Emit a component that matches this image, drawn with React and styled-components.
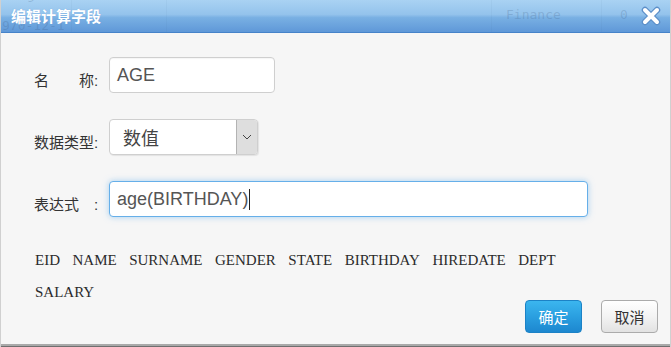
import React from "react";
import styled, { createGlobalStyle } from "styled-components";

const GlobalStyle = createGlobalStyle`
	html, body {
		margin: 0;
		padding: 0;
		background: #f6f6f6;
	}
	* {
		box-sizing: border-box;
	}
`;

const CJK = `"Liberation Sans", "Noto Sans CJK SC", sans-serif`;

const Dialog = styled.div`
	width: 671px;
	height: 347px;
	display: flex;
	flex-direction: column;
	background: #f6f6f6;
	border-left: 1px solid #d0d0d0;
	border-right: 1px solid #d0d0d0;
	box-shadow: inset 0 -1px 0 #6f6f6f, inset 0 -3px 0 #a9a9a9;
	overflow: hidden;
`;

const TitleBar = styled.div`
	position: relative;
	height: 33px;
	flex-shrink: 0;
	display: flex;
	align-items: center;
	justify-content: space-between;
	padding: 0 8px 1px 10px;
	background: linear-gradient(to bottom, #a9d2f3 0%, #94c3ec 45%, #79b0e3 55%, #5f98d8 100%);
	border-bottom: 1px solid #4683c9;
`;

// faint table behind the translucent title bar
const Ghost = styled.span`
	position: absolute;
	left: ${(p) => p.x}px;
	top: ${(p) => p.y}px;
	font-family: "DejaVu Sans Mono", "Liberation Mono", monospace;
	font-size: 13px;
	color: rgba(60, 90, 130, 0.22);
	white-space: pre;
`;

const GhostLine = styled.span`
	position: absolute;
	left: ${(p) => p.x}px;
	top: 0;
	bottom: 0;
	width: 1px;
	background: rgba(60, 90, 130, 0.05);
`;

const Title = styled.span`
	position: relative;
	font-family: ${CJK};
	font-size: 15px;
	font-weight: bold;
	color: #fff;
	text-shadow: 0 0 1px #6c9fd8;
`;

const Close = styled.svg`
	position: relative;
	width: 22px;
	height: 22px;
`;

const Body = styled.div`
	flex: 1;
	display: flex;
	flex-direction: column;
	padding: 24px 0 0 33px;
`;

const Form = styled.div`
	display: flex;
	flex-direction: column;
	gap: 26px;
`;

const Row = styled.div`
	display: flex;
	align-items: center;
	height: 36px;
`;

const Label = styled.span`
	width: 75px;
	margin-top: 8px;
	font-family: ${CJK};
	font-size: 15px;
	color: #333;
	white-space: pre;
`;

const TextBox = styled.div`
	width: ${(p) => p.w}px;
	height: 36px;
	display: flex;
	align-items: center;
	padding-left: 7px;
	background: #fff;
	border: 1px solid ${(p) => (p.focused ? "#66afe9" : "#cfcfcf")};
	border-radius: 4px;
	box-shadow: ${(p) =>
		p.focused ? "0 0 6px rgba(102, 175, 233, 0.55)" : "inset 0 1px 1px rgba(0, 0, 0, 0.04)"};
	font-family: "Liberation Sans", Arial, sans-serif;
	font-size: 18px;
	color: #555;
`;

const Caret = styled.span`
	display: inline-block;
	width: 1px;
	height: 21px;
	margin-left: 1px;
	background: #222;
`;

const Select = styled.div`
	width: 149px;
	height: 36px;
	display: flex;
	background: #fff;
	border: 1px solid #cfcfcf;
	border-radius: 4px;
	overflow: hidden;
	box-shadow: 1px 1px 1px rgba(0, 0, 0, 0.08);
`;

const SelectValue = styled.span`
	flex: 1;
	display: flex;
	align-items: center;
	padding-left: 13px;
	font-family: ${CJK};
	font-size: 18px;
	color: #444;
`;

const ArrowBox = styled.span`
	width: 21px;
	display: flex;
	align-items: center;
	justify-content: center;
	background: #dedede;
	border-left: 1px solid #b3b3b3;
`;

const FieldList = styled.div`
	width: 557px;
	margin: 27px 0 -12px 1px;
	display: flex;
	flex-wrap: wrap;
	column-gap: 12.5px;
	font-family: "Liberation Serif", "Times New Roman", serif;
	font-size: 15px;
	line-height: 32px;
	color: #2b2b2b;
`;

const Footer = styled.div`
	display: flex;
	justify-content: flex-end;
	gap: 19px;
	padding: 0 12px 14px 0;
	margin-top: auto;
`;

const Button = styled.button`
	width: 57px;
	height: 33px;
	padding: 0;
	border-radius: 4px;
	font-family: ${CJK};
	font-size: 15px;
	cursor: pointer;
	border: 1px solid ${(p) => (p.primary ? "#1c82c6" : "#ababab")};
	color: ${(p) => (p.primary ? "#fff" : "#333")};
	background: ${(p) =>
		p.primary
			? "linear-gradient(to bottom, #3bb6ef 0%, #2a9fe0 50%, #1d87cf 100%)"
			: "linear-gradient(to bottom, #ffffff 0%, #f3f3f3 50%, #e2e2e2 100%)"};
`;

const fields = ["EID", "NAME", "SURNAME", "GENDER", "STATE", "BIRTHDAY", "HIREDATE", "DEPT", "SALARY"];

export default function App() {
	return (
		<>
			<GlobalStyle />
			<Dialog>
				<TitleBar>
					<Ghost x={26} y={-10}>9</Ghost>
					<Ghost x={1} y={18}>970-12-1</Ghost>
					<Ghost x={505} y={7}>Finance</Ghost>
					<Ghost x={619} y={7}>0</Ghost>
					<GhostLine x={70} />
					<GhostLine x={165} />
					<GhostLine x={490} />
					<GhostLine x={600} />
					<Title>编辑计算字段</Title>
					<Close viewBox="0 0 22 22">
						<path d="M5 5 L17 17 M17 5 L5 17" stroke="#5c8fc9" strokeWidth="6.5" strokeLinecap="round" fill="none" />
						<path d="M5 5 L17 17 M17 5 L5 17" stroke="#fff" strokeWidth="4" strokeLinecap="round" fill="none" />
					</Close>
				</TitleBar>
				<Body>
					<Form>
						<Row>
							<Label>名　　称:</Label>
							<TextBox w={166}>AGE</TextBox>
						</Row>
						<Row>
							<Label>数据类型:</Label>
							<Select>
								<SelectValue>数值</SelectValue>
								<ArrowBox>
									<svg width="10" height="6" viewBox="0 0 10 6">
										<path d="M1 1 L5 5 L9 1" stroke="#444" strokeWidth="1" fill="none" />
									</svg>
								</ArrowBox>
							</Select>
						</Row>
						<Row>
							<Label>表达式　:</Label>
							<TextBox w={479} focused>
								age(BIRTHDAY)
								<Caret />
							</TextBox>
						</Row>
					</Form>
					<FieldList>
						{fields.map((f) => (
							<span key={f}>{f}</span>
						))}
					</FieldList>
					<Footer>
						<Button primary>确定</Button>
						<Button>取消</Button>
					</Footer>
				</Body>
			</Dialog>
		</>
	);
}
